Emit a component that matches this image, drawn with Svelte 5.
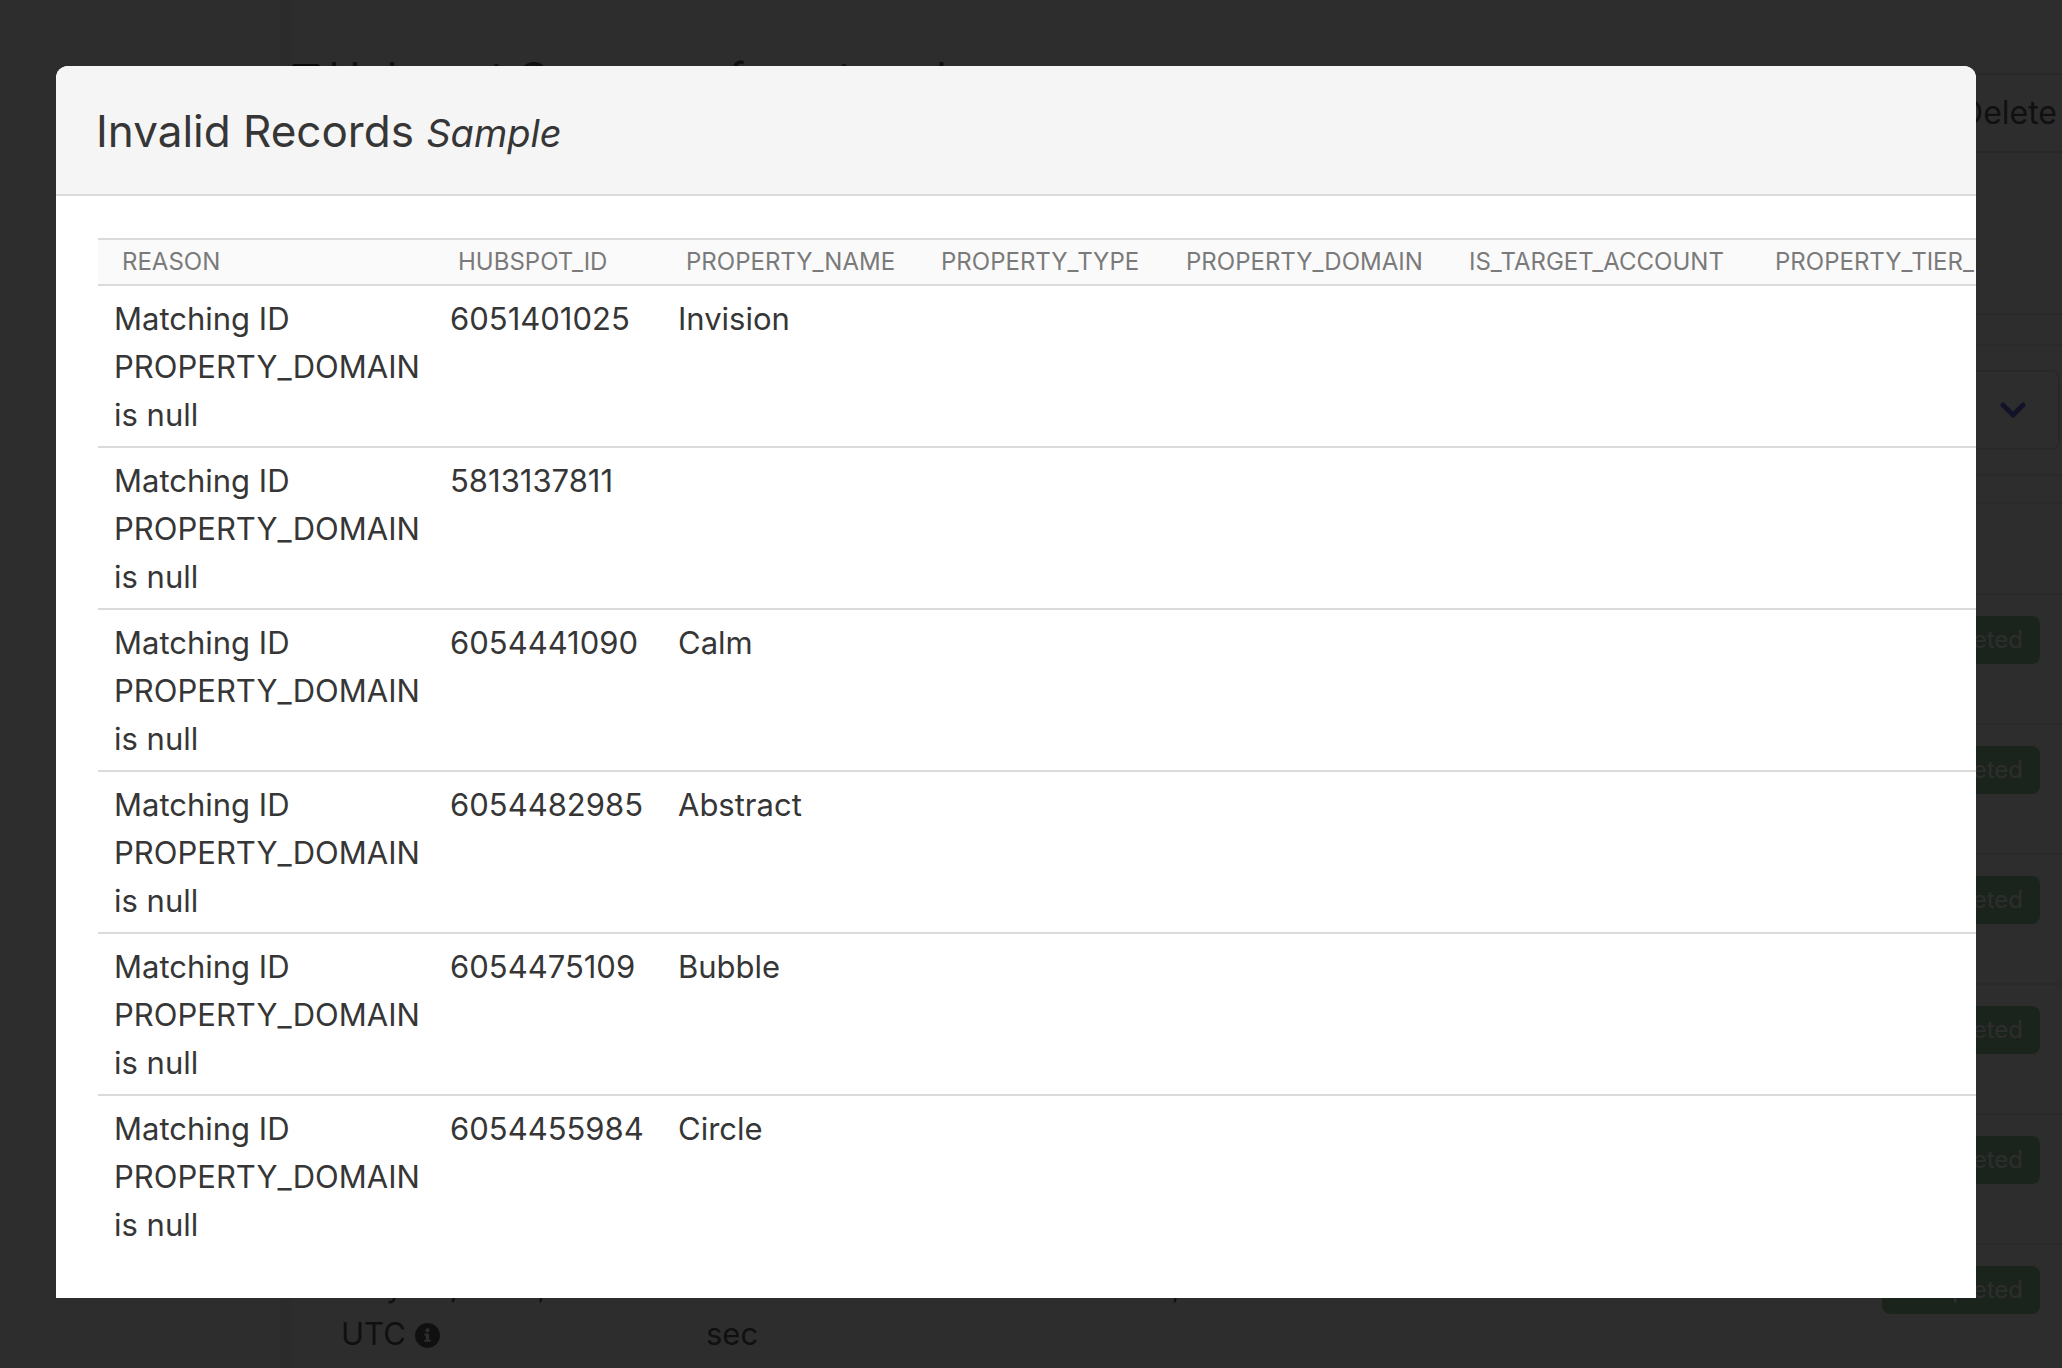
<script>
  const COLUMNS = [
    { name: 'REASON', width: 336 },
    { name: 'HUBSPOT_ID', width: 228 },
    { name: 'PROPERTY_NAME', width: 255 },
    { name: 'PROPERTY_TYPE', width: 245 },
    { name: 'PROPERTY_DOMAIN', width: 283 },
    { name: 'IS_TARGET_ACCOUNT', width: 306 },
    { name: 'PROPERTY_TIER_', width: 330 },
  ];

  const REASON = 'Matching ID PROPERTY_DOMAIN is null';

  const records = [
    { id: '6051401025', name: 'Invision' },
    { id: '5813137811', name: '' },
    { id: '6054441090', name: 'Calm' },
    { id: '6054482985', name: 'Abstract' },
    { id: '6054475109', name: 'Bubble' },
    { id: '6054455984', name: 'Circle' },
  ];

  const runs = [
    { id: 1 },
    { id: 2 },
    { id: 3 },
    { id: 4 },
    { id: 5 },
    { id: 6, date: 'May 05, 2021, 9:30', took: '3 min 8', rows: '3,458', added: '0', failed: '6' },
  ];
</script>

<div class="page">
  <!-- sync page underneath the modal -->
  <div class="sidebar"></div>
  <main class="content">
    <header class="page-head">
      <h1>
        <svg class="head-icon" viewBox="0 0 28 28" aria-hidden="true"><rect width="28" height="28" rx="3" /></svg>
        Hubspot Company from trend
      </h1>
      <button class="delete" type="button">Delete</button>
    </header>

    <section class="filters">
      <button class="expander" type="button" aria-label="Expand">
        <svg class="chevron" viewBox="0 0 26 18" aria-hidden="true"><path d="M3 4l10 10L23 4" /></svg>
      </button>
    </section>

    <section class="runs">
      <table class="runs-table">
        <colgroup>
          <col style="width: 365px" />
          <col style="width: 447px" />
          <col style="width: 198px" />
          <col style="width: 131px" />
          <col style="width: 240px" />
          <col />
        </colgroup>
        <tbody>
          {#each runs as run (run.id)}
            <tr>
              <td>
                {#if run.date}
                  {run.date}<br />UTC
                  <svg class="info" viewBox="0 0 24 24" aria-hidden="true">
                    <circle cx="12" cy="12" r="12" />
                    <circle class="cut" cx="12" cy="7" r="2" />
                    <path class="cut" d="M9 10h4.500v6H15v2H9v-2h1.500v-4H9z" />
                  </svg>
                {/if}
              </td>
              <td>{#if run.took}{run.took}<br />sec{/if}</td>
              <td>{run.rows ?? ''}</td>
              <td>{run.added ?? ''}</td>
              <td>{run.failed ?? ''}</td>
              <td class="status"><span class="tag">Completed</span></td>
            </tr>
          {/each}
        </tbody>
      </table>
    </section>
  </main>

  <div class="modal-background"></div>
  <div class="modal" role="dialog" aria-modal="true" aria-labelledby="modal-title">
    <header class="modal-head">
      <h2 id="modal-title">Invalid Records <em>Sample</em></h2>
    </header>
    <div class="modal-body">
      <table class="records">
        <colgroup>
          {#each COLUMNS as col (col.name)}
            <col style="width: {col.width}px" />
          {/each}
        </colgroup>
        <thead>
          <tr>
            {#each COLUMNS as col (col.name)}
              <th scope="col">{col.name}</th>
            {/each}
          </tr>
        </thead>
        <tbody>
          {#each records as record (record.id)}
            <tr>
              <td>{REASON}</td>
              <td>{record.id}</td>
              <td>{record.name}</td>
              <td></td>
              <td></td>
              <td></td>
              <td></td>
            </tr>
          {/each}
        </tbody>
      </table>
    </div>
  </div>
</div>

<style>
  :global(body) {
    background: #fff;
    color: #363636;
    font-family: Inter, 'Liberation Sans', sans-serif;
    font-size: 31px;
    line-height: 48px;
  }
  .page {
    position: relative;
    display: flex;
    height: 100vh;
    overflow: hidden;
  }
  .sidebar {
    flex: 0 0 280px;
    border-right: 12px solid #f0f0f0;
  }
  .content {
    flex: 1;
    min-width: 0;
  }
  .page-head {
    display: flex;
    align-items: flex-start;
    justify-content: space-between;
    box-sizing: border-box;
    height: 315px;
    padding-top: 48px;
    border-bottom: 2px solid #e6e6e6;
  }
  h1 {
    display: flex;
    align-items: center;
    gap: 8px;
    height: 60px;
    margin: 0;
    color: #363636;
    font-size: 44px;
    font-weight: 400;
  }
  .head-icon {
    flex: none;
    width: 28px;
    height: 28px;
  }
  .delete {
    height: 80px;
    margin-top: 25px;
    padding: 0 5px 0 40px;
    border: 2px solid #dbdbdb;
    border-right: 0;
    background: #fff;
    color: #363636;
    font: inherit;
    font-size: 32px;
  }
  .filters {
    display: flex;
    justify-content: flex-end;
    margin-top: 29px;
    padding: 24px 2px;
    border-top: 2px solid #e6e6e6;
    border-bottom: 2px solid #e6e6e6;
  }
  .expander {
    display: flex;
    align-items: center;
    justify-content: flex-end;
    width: 400px;
    height: 80px;
    padding: 0 32px;
    border: 2px solid #dbdbdb;
    border-radius: 8px;
    background: #fff;
  }
  .chevron {
    width: 26px;
    height: 18px;
    fill: none;
    stroke: #4040d8;
    stroke-width: 5;
    stroke-linecap: round;
    stroke-linejoin: round;
  }
  .runs {
    margin: 26px 0 0 25px;
    padding-top: 89px;
    border-top: 2px solid #e6e6e6;
  }
  .runs-table {
    table-layout: fixed;
    width: 100%;
    border-collapse: separate;
    border-spacing: 0;
  }
  .runs-table td {
    height: 96px;
    padding: 17px 0 15px 24px;
    border-top: 2px solid #e6e6e6;
    vertical-align: top;
  }
  .runs-table .status {
    padding: 21px 22px 0 0;
    text-align: right;
  }
  .tag {
    display: inline-block;
    padding: 0 17px;
    border-radius: 8px;
    background: #7bc087;
    color: #fff;
    font-size: 24px;
    vertical-align: top;
  }
  .info {
    width: 25px;
    height: 25px;
    vertical-align: -3px;
    fill: #363636;
  }
  .cut {
    fill: #fff;
  }
  .modal-background {
    position: absolute;
    inset: 0;
    background: rgba(10, 10, 10, 0.86);
  }
  .modal {
    position: absolute;
    top: 66px;
    left: 56px;
    right: 86px;
    overflow: hidden;
    border-radius: 12px 12px 0 0;
    background: #fff;
  }
  .modal-head {
    padding: 41px 40px 39px;
    border-bottom: 2px solid #dbdbdb;
    background: #f5f5f5;
  }
  h2 {
    margin: 0;
    font-size: 44px;
    font-weight: 400;
    line-height: 48px;
  }
  h2 em {
    font-size: 38px;
    line-height: 1;
  }
  .modal-body {
    padding: 42px 0 42px 42px;
  }
  .records {
    table-layout: fixed;
    width: 1983px;
    border-collapse: separate;
    border-spacing: 0;
  }
  .records th {
    padding: 6px 24px;
    border-top: 2px solid #dbdbdb;
    border-bottom: 2px solid #dbdbdb;
    background: #fafafa;
    color: #7a7a7a;
    font-size: 24px;
    font-weight: 400;
    line-height: 32px;
    text-align: left;
    white-space: nowrap;
  }
  .records td {
    padding: 9px 16px 7px;
    border-bottom: 2px solid #dbdbdb;
    vertical-align: top;
  }
  .records tbody tr:last-child td {
    border-bottom: 0;
  }
</style>
